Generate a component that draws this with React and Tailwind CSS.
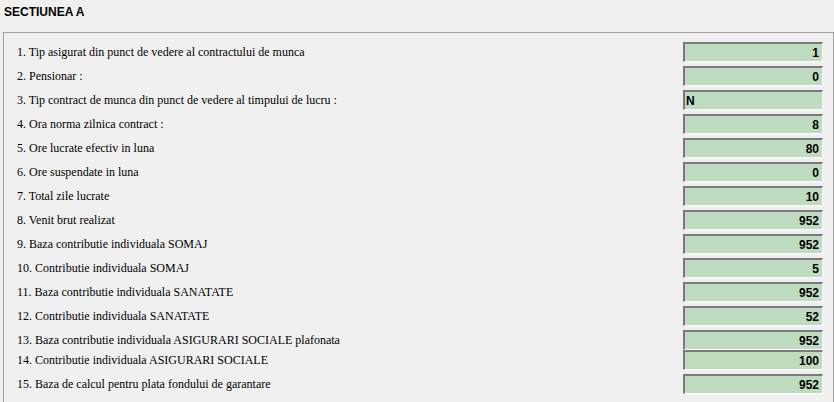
const rows = [
  ["1. Tip asigurat din punct de vedere al contractului de munca", "1"],
  ["2. Pensionar :", "0"],
  ["3. Tip contract de munca din punct de vedere al timpului de lucru :", "N", true],
  ["4. Ora norma zilnica contract :", "8"],
  ["5. Ore lucrate efectiv in luna", "80"],
  ["6. Ore suspendate in luna", "0"],
  ["7. Total zile lucrate", "10"],
  ["8. Venit brut realizat", "952"],
  ["9. Baza contributie individuala SOMAJ", "952"],
  ["10. Contributie individuala SOMAJ", "5"],
  ["11. Baza contributie individuala SANATATE", "952"],
  ["12. Contributie individuala SANATATE", "52"],
  ["13. Baza contributie individuala ASIGURARI SOCIALE plafonata", "952"],
  ["14. Contributie individuala ASIGURARI SOCIALE", "100"],
  ["15. Baza de calcul pentru plata fondului de garantare", "952"],
];

export default function App() {
  return (
    <div className="w-[834px] h-[402px] overflow-hidden bg-[#f0f0f0]">
      {/* Title */}
      <div className="pl-[4px] pt-[3px] h-[32px] font-['Liberation_Sans',Arial,sans-serif] font-bold text-[12px] text-black">
        SECTIUNEA A
      </div>

      {/* Section box */}
      <div className="ml-[3px] w-[831px] h-[500px] border border-[#a0a0a0] pt-[9px]">
        {rows.map(([label, value, left], i) => (
          <div
            key={i}
            className={
              "flex items-center h-[20px] " + (i === 12 ? "mb-0" : "mb-[4px]")
            }
          >
            <div className="pl-[13px] flex-1 font-['Liberation_Serif','Times_New_Roman',serif] text-[12px] text-black leading-none">
              {label}
            </div>
            <div
              className={
                "w-[140px] h-[20px] mr-[10px] flex items-center bg-[#c0dcc0] border-t-2 border-l-2 border-t-[#7a7a7a] border-l-[#7a7a7a] border-b border-r border-b-[#ffffff] border-r-[#ffffff] font-['Liberation_Sans',Arial,sans-serif] font-bold text-[12px] text-black leading-none " +
                (left ? "justify-start pl-[1px]" : "justify-end pr-[3px]")
              }
            >
              {value}
            </div>
          </div>
        ))}
      </div>
    </div>
  );
}
